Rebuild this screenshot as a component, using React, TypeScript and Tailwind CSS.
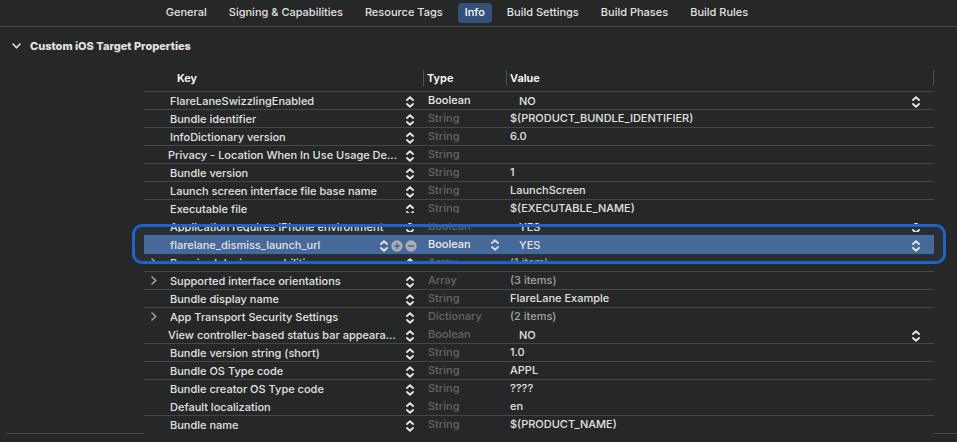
import React from 'react';
import clsx from 'clsx';

interface Property {
  key: string;
  type: string;
  value: string;
  wide?: boolean;
  expandable?: boolean;
  editable?: boolean;
  selected?: boolean;
  line?: string;
  clip?: string;
}

const tabs = ['General', 'Signing & Capabilities', 'Resource Tags', 'Info', 'Build Settings', 'Build Phases', 'Build Rules'];

const properties: Property[] = [
  { key: 'FlareLaneSwizzlingEnabled', type: 'Boolean', value: 'NO', editable: true },
  { key: 'Bundle identifier', type: 'String', value: '$(PRODUCT_BUNDLE_IDENTIFIER)' },
  { key: 'InfoDictionary version', type: 'String', value: '6.0' },
  { key: 'Privacy - Location When In Use Usage De...', type: 'String', value: '', wide: true },
  { key: 'Bundle version', type: 'String', value: '1' },
  { key: 'Launch screen interface file base name', type: 'String', value: 'LaunchScreen' },
  { key: 'Executable file', type: 'String', value: '$(EXECUTABLE_NAME)', line: 'border-transparent', clip: '[clip-path:inset(0_0_4px_0)]' },
  { key: 'Application requires iPhone environment', type: 'Boolean', value: 'YES', line: 'border-[#3470b0]', clip: '[clip-path:inset(5px_0_3px_0)]' },
  { key: 'flarelane_dismiss_launch_url', type: 'Boolean', value: 'YES', editable: true, selected: true, line: 'border-[#3470b0]' },
  { key: 'Required device capabilities', type: 'Array', value: '(1 item)', expandable: true, clip: '[clip-path:inset(4px_0_10px_0)]' },
  { key: 'Supported interface orientations', type: 'Array', value: '(3 items)', expandable: true },
  { key: 'Bundle display name', type: 'String', value: 'FlareLane Example' },
  { key: 'App Transport Security Settings', type: 'Dictionary', value: '(2 items)', expandable: true, line: 'border-transparent' },
  { key: 'View controller-based status bar appeara...', type: 'Boolean', value: 'NO', wide: true },
  { key: 'Bundle version string (short)', type: 'String', value: '1.0' },
  { key: 'Bundle OS Type code', type: 'String', value: 'APPL' },
  { key: 'Bundle creator OS Type code', type: 'String', value: '????', line: 'border-transparent' },
  { key: 'Default localization', type: 'String', value: 'en' },
  { key: 'Bundle name', type: 'String', value: '$(PRODUCT_NAME)', line: 'border-transparent' },
];

const UpDown: React.FC = () => (
  <svg width="8" height="12" viewBox="0 0 8 12" fill="none" stroke="currentColor" strokeWidth="1.9" strokeLinecap="round" strokeLinejoin="round" aria-hidden="true">
    <path d="M1 4 4 1.2 7 4M1 8 4 10.8 7 8" />
  </svg>
);

const RoundButton: React.FC<{ label: string; d: string }> = ({ label, d }) => (
  <button type="button" aria-label={label} className="text-[#a9adb3]">
    <svg width="12" height="12" viewBox="0 0 12 12" fill="none">
      <circle cx="6" cy="6" r="5.7" fill="currentColor" />
      <path d={d} stroke="#4a688f" strokeWidth="1.5" strokeLinecap="round" />
    </svg>
  </button>
);

const PropertyRow: React.FC<{ item: Property }> = ({ item }) => {
  const cell = clsx('border-b p-0', item.line ?? 'border-[#464747]', item.selected && 'bg-[#47699a]');
  const content = clsx('flex h-[17px] items-center', item.clip);
  const isBoolean = item.type === 'Boolean';

  return (
    <tr className={clsx('h-[18px]', item.selected && 'relative')}>
      <td className={cell}>
        {item.selected && (
          <>
            <span className="absolute -inset-x-3 -top-3 -bottom-[10px] -z-10 rounded-[10px] bg-[#2b2f31]"></span>
            <span className="pointer-events-none absolute -inset-x-3 -top-3 -bottom-[10px] rounded-[10px] border-3 border-[#2062c9]"></span>
          </>
        )}
        <div className={content}>
          <span className={clsx('flex shrink-0 justify-start pl-[7px]', item.wide ? 'w-6' : 'w-[26px]')}>
            {item.expandable && (
              <button type="button" aria-label={`Expand ${item.key}`} className="text-[#a6a7a7]">
                <svg width="6" height="9" viewBox="0 0 6 9" fill="none" stroke="currentColor" strokeWidth="1.5" strokeLinecap="round" strokeLinejoin="round">
                  <path d="M1 1 4.8 4.5 1 8" />
                </svg>
              </button>
            )}
          </span>
          <span className="flex-1 whitespace-nowrap">{item.key}</span>
          <span className={clsx('flex items-center gap-[3px] pt-[2px]', item.selected ? 'pr-[7px]' : 'pr-[10px]')}>
            <button type="button" aria-label={`Choose key for ${item.key}`}><UpDown /></button>
            {item.selected && (
              <span className="flex gap-[2px]">
                <RoundButton label="Add row" d="M3.5 6h5M6 3.5v5" />
                <RoundButton label="Remove row" d="M3.5 6h5" />
              </span>
            )}
          </span>
        </div>
      </td>
      <td className={cell}>
        <div className={clsx(content, 'pb-px pl-1', item.editable ? 'text-[#eaeaea]' : 'text-[#656666]')}>
          {item.selected ? (
            <>
              <select aria-label="Type" defaultValue={item.type} className="flex-1 appearance-none">
                <option>Boolean</option>
                <option>String</option>
                <option>Array</option>
                <option>Dictionary</option>
              </select>
              <span className="pointer-events-none pt-[2px] pr-2 text-[#cfd6e0]"><UpDown /></span>
            </>
          ) : (
            item.type
          )}
        </div>
      </td>
      <td className={cell}>
        {isBoolean ? (
          <div className={clsx(content, 'pl-3 pt-px')}>
            <select aria-label={`Value of ${item.key}`} defaultValue={item.value} className="flex-1 appearance-none">
              <option>YES</option>
              <option>NO</option>
            </select>
            <span className="pointer-events-none pt-px pr-[14px]"><UpDown /></span>
          </div>
        ) : (
          <div className={clsx(content, 'pb-px pl-[3px]', item.expandable && 'text-[#a3a4a4]')}>{item.value}</div>
        )}
      </td>
    </tr>
  );
};

const App: React.FC = () => {
  return (
    <div className="min-h-screen bg-[#262727] font-['Inter',sans-serif] text-[11px] leading-4 font-medium text-[#e2e2e2]">
      <nav className="flex h-[27px] items-center justify-center gap-2 border-b border-[#464747] pr-[43px] pb-px">
        {tabs.map(tab => (
          <button key={tab} type="button" className={clsx('flex h-5 items-center rounded px-[7px] pb-px whitespace-nowrap', tab === 'Info' && 'bg-[#32527b] text-white')}>
            {tab}
          </button>
        ))}
      </nav>

      <section>
        <h2 className="flex h-[37px] items-center font-extrabold">
          <button type="button" className="flex items-center gap-[9px] pl-3">
            <svg width="9" height="6" viewBox="0 0 9 6" fill="none" stroke="currentColor" strokeWidth="1.6" strokeLinecap="round" strokeLinejoin="round" aria-hidden="true">
              <path d="M1 1 4.5 4.8 8 1" />
            </svg>
            Custom iOS Target Properties
          </button>
        </h2>

        <div className="isolate flex">
          <div className="w-36 shrink-0 pl-[5px]">
            <div className="h-full border-b border-[#464747]"></div>
          </div>
          <table className="flex-1 table-fixed border-separate border-spacing-0">
            <colgroup>
              <col className="w-[280px]" />
              <col className="w-[83px]" />
              <col />
            </colgroup>
            <thead>
              <tr className="h-7 text-left text-white">
                <th className="border-b border-[#464747] p-0 font-semibold">
                  <div className="h-4 border-r border-[#505151] pl-[33px]">Key</div>
                </th>
                <th className="border-b border-[#464747] p-0 font-semibold">
                  <div className="h-4 border-r border-[#505151] pl-[3px]">Type</div>
                </th>
                <th className="border-b border-[#464747] p-0 font-semibold">
                  <div className="h-4 border-r border-[#505151] pl-[3px]">Value</div>
                </th>
              </tr>
            </thead>
            <tbody>
              {properties.map(item => (
                <PropertyRow key={item.key} item={item} />
              ))}
            </tbody>
          </table>
          <div className="w-[23px] shrink-0 border-b border-[#464747]"></div>
        </div>
      </section>
    </div>
  );
};

export default App;
